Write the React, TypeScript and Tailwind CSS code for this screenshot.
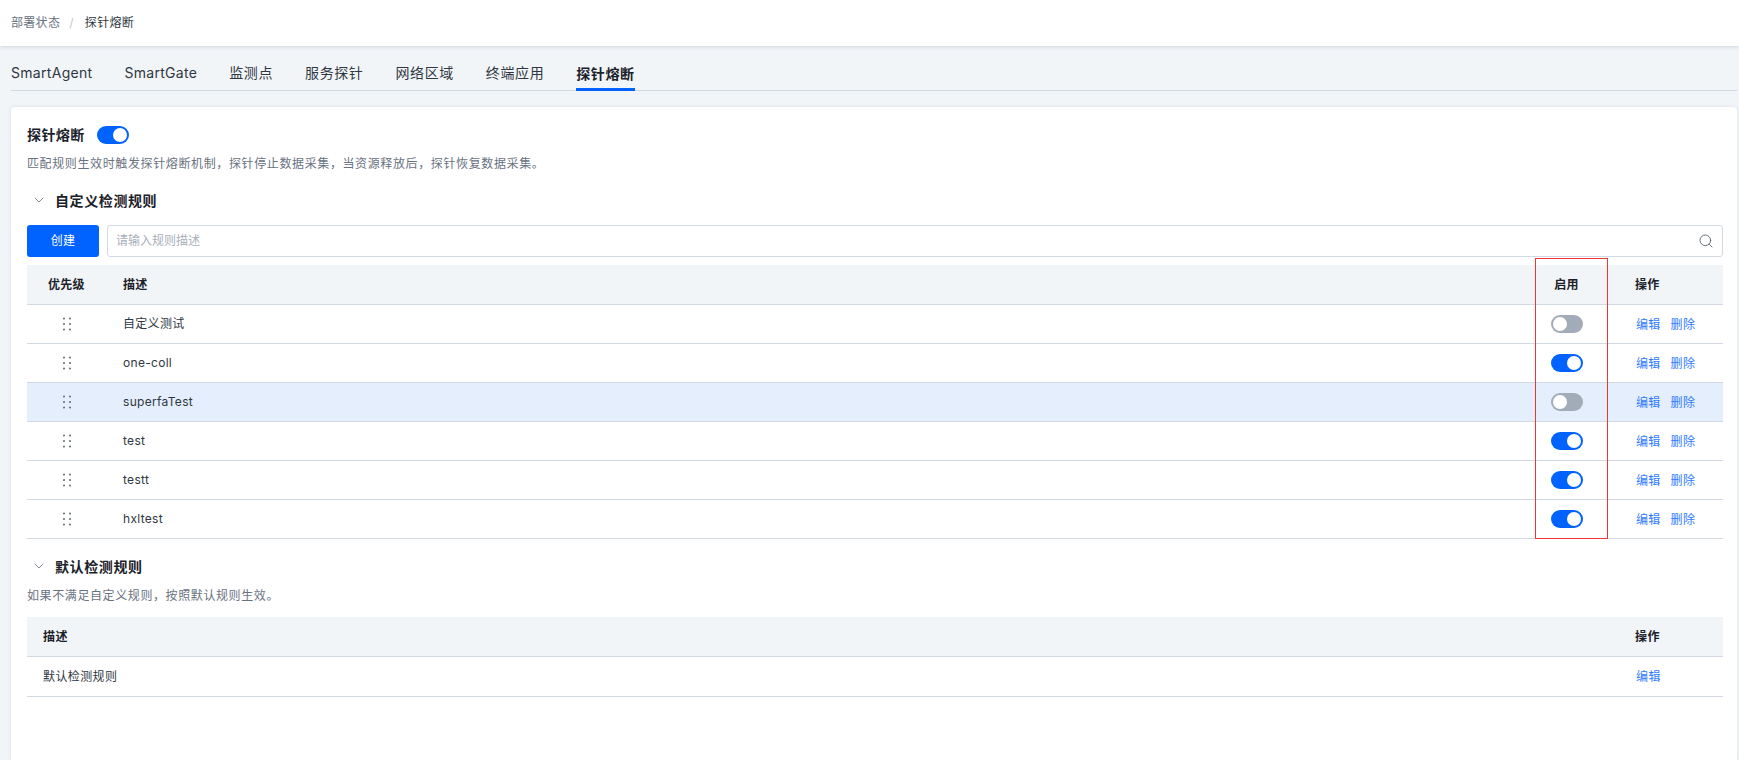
import React from "react";
import { ChevronDown, Search } from "lucide-react";

const FONT = "font-['Inter','Noto_Sans_CJK_SC',sans-serif]";

function Toggle({ on }: { on: boolean }) {
  return (
    <span className={`flex h-[18px] w-[32px] shrink-0 items-center rounded-full px-[2px] ${on ? "justify-end bg-[#0062ff]" : "justify-start bg-[#a2abb8]"}`}>
      <span className="h-[14px] w-[14px] rounded-full bg-white" />
    </span>
  );
}

function Grip() {
  return (
    <svg width="8" height="14" viewBox="0 0 8 14" className="fill-[#6f7885]">
      {[1.5, 7, 12.5].map((y) =>
        [1, 7].map((x) => <circle key={`${x}-${y}`} cx={x} cy={y} r="1.1" />)
      )}
    </svg>
  );
}

function SectionTitle({ children }: { children: React.ReactNode }) {
  return (
    <div className="flex h-[20px] items-center text-[14px] font-semibold tracking-[0.6px] text-[#1b2129]">
      <ChevronDown size={16} strokeWidth={1.25} className="ml-[4px] mr-[8px] text-[#6f7885]" />
      {children}
    </div>
  );
}

const rules = [
  { name: "自定义测试", on: false },
  { name: "one-coll", on: true },
  { name: "superfaTest", on: false, active: true },
  { name: "test", on: true },
  { name: "testt", on: true },
  { name: "hxltest", on: true },
];

export default function App() {
  return (
    <div className={`${FONT} flex h-[760px] flex-col overflow-hidden bg-[#f2f5f8] text-[12px] text-[#2f3742]`}>
      <header className="flex h-[46px] shrink-0 items-center bg-white pl-[11px] tracking-[0.3px] shadow-[0_1px_4px_rgba(40,50,70,0.16)]">
        <span className="text-[#69727f]">部署状态</span>
        <span className="mx-[9px] text-[#c2c8d1]">/</span>
        <span className="ml-[2px] text-[#2f3742]">探针熔断</span>
      </header>

      <nav className="ml-[11px] mr-[2px] flex h-[45px] shrink-0 gap-[32px] border-b border-[#d3d9e3] text-[14px] tracking-[0.6px] text-[#2f3742]">
        <span className="flex h-[44px] items-center pt-[9px] tracking-[0.3px]">SmartAgent</span>
        <span className="flex h-[44px] items-center pt-[9px] tracking-[0.3px]">SmartGate</span>
        <span className="flex h-[44px] items-center pt-[9px]">监测点</span>
        <span className="flex h-[44px] items-center pt-[9px]">服务探针</span>
        <span className="flex h-[44px] items-center pt-[9px]">网络区域</span>
        <span className="flex h-[44px] items-center pt-[9px]">终端应用</span>
        <span className="flex h-[45px] items-center border-b-[3px] border-[#0062ff] pt-[12px] font-semibold text-[#1b2129]">探针熔断</span>
      </nav>

      <main className="ml-[11px] mr-[2px] mt-[16px] flex-1 rounded-t-[4px] bg-white pl-[16px] pr-[14px] pt-[19px] shadow-[0_0_4px_rgba(40,50,70,0.12)]">
        <div className="flex h-[18px] items-center gap-[12px] text-[14px] font-semibold tracking-[0.4px] text-[#1b2129]">
          <span className="mt-[-2px]">探针熔断</span>
          <Toggle on />
        </div>
        <p className="mt-[11px] h-[18px] leading-[18px] tracking-[0.62px] text-[#69727f]">匹配规则生效时触发探针熔断机制，探针停止数据采集，当资源释放后，探针恢复数据采集。</p>

        <div className="mt-[17px]"><SectionTitle>自定义检测规则</SectionTitle></div>

        <div className="mt-[15px] flex h-[32px] gap-[8px]">
          <button className="w-[72px] rounded-[3px] bg-[#0062ff] tracking-[0.3px] text-white">创建</button>
          <div className="flex flex-1 items-center rounded-[3px] border border-[#d3d9e3] pl-[8px] pr-[8px] text-[#a7afba]">
            <span className="flex-1">请输入规则描述</span>
            <Search size={16} strokeWidth={1.25} className="text-[#4f5864]" />
          </div>
        </div>

        <div className="relative mt-[8px] tracking-[0.3px]">
          <div className="flex h-[40px] items-center border-b border-[#d3d9e3] bg-[#f2f5f8] pt-[1px] font-semibold text-[#1b2129]">
            <span className="w-[96px] pl-[21px]">优先级</span>
            <span className="flex-1">描述</span>
            <span className="w-[49px] text-center">启用</span>
            <span className="ml-[44px] w-[88px]">操作</span>
          </div>
          {rules.map((r) => (
            <div key={r.name} className={`flex h-[39px] items-center border-b border-[#d3d9e3] ${r.active ? "bg-[#e4eefc]" : ""}`}>
              <span className="flex w-[96px] justify-center pr-[16px]"><Grip /></span>
              <span className="flex-1">{r.name}</span>
              <span className="flex w-[49px] justify-center"><Toggle on={r.on} /></span>
              <span className="ml-[44px] flex w-[88px] gap-[10px] pl-[1px] pt-[1px] text-[#2f7bff]">
                <span>编辑</span>
                <span>删除</span>
              </span>
            </div>
          ))}
          <div className="pointer-events-none absolute left-[1508px] top-[-7px] h-[281px] w-[73px] border border-[#f0362e]" />
        </div>

        <div className="mt-[17px]"><SectionTitle>默认检测规则</SectionTitle></div>
        <p className="mt-[11px] h-[18px] leading-[18px] tracking-[0.6px] text-[#69727f]">如果不满足自定义规则，按照默认规则生效。</p>

        <div className="mt-[12px] tracking-[0.4px]">
          <div className="flex h-[40px] items-center border-b border-[#d3d9e3] bg-[#f2f5f8] pl-[16px] pt-[1px] font-semibold text-[#1b2129]">
            <span className="flex-1">描述</span>
            <span className="w-[88px]">操作</span>
          </div>
          <div className="flex h-[40px] items-center border-b border-[#d3d9e3] pl-[16px]">
            <span className="flex-1">默认检测规则</span>
            <span className="w-[88px] pl-[1px] pt-[1px] text-[#2f7bff]">编辑</span>
          </div>
        </div>
      </main>
    </div>
  );
}
